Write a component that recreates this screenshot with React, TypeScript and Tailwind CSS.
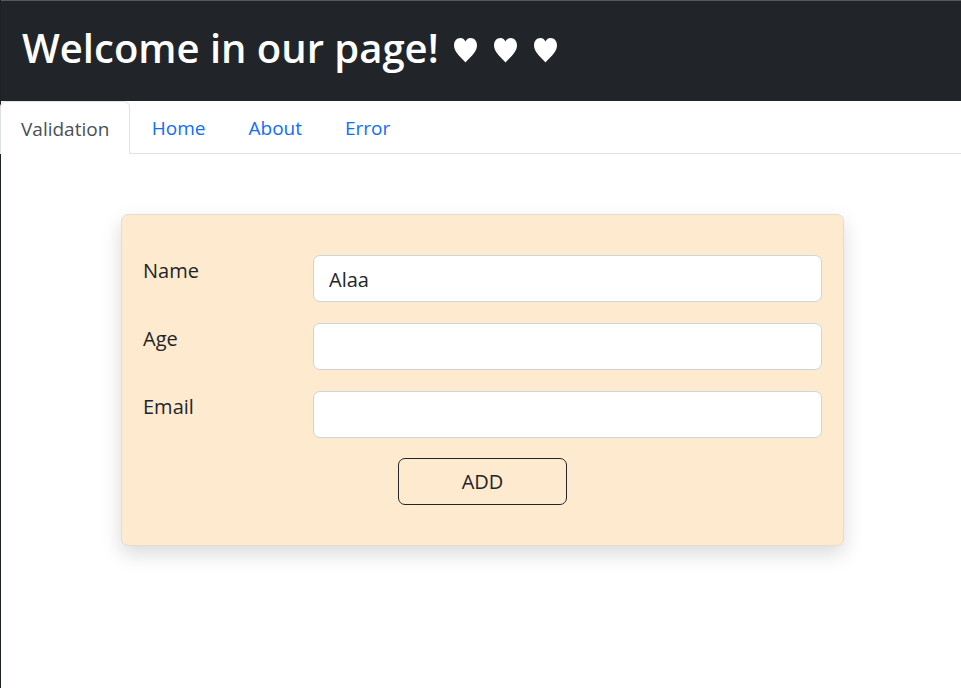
import { useState } from 'react';

const tabs = ['Validation', 'Home', 'About', 'Error'];

function Heart() {
  return (
    <svg width="25" height="26" viewBox="0 0 25 26" className="inline-block">
      <path
        d="M12.5 25.5 C9 21 1 15.5 1 8.2 C1 3.8 4 1 7.4 1 C10 1 11.6 2.6 12.5 4.6 C13.4 2.6 15 1 17.6 1 C21 1 24 3.8 24 8.2 C24 15.5 16 21 12.5 25.5 Z"
        fill="#ffffff"
      />
    </svg>
  );
}

function Field({ label, value }: { label: string; value: string }) {
  return (
    <div className="flex items-start">
      <label className="w-[170px] shrink-0 pt-[1px] text-[20px] leading-[30px] text-[#212529]">{label}</label>
      <input
        defaultValue={value}
        className="h-[47px] flex-1 rounded-[7px] border border-[#ced4da] bg-white px-[15px] pt-[2px] text-[20px] text-[#212529] outline-none"
      />
    </div>
  );
}

export default function App() {
  const [active, setActive] = useState('Validation');

  return (
    <div className="min-h-[688px] bg-white border-l border-[#1e2125] font-['Open_Sans',sans-serif]">
      {/* Header */}
      <header className="h-[101px] bg-[#212529] border-t border-[#555a60] flex items-center px-[21px]">
        <h1 className="flex items-center text-[40px] font-semibold text-white pb-[6px]">
          Welcome in our page!
          <span className="ml-[14px] flex items-center gap-[15px] pt-[4px]">
            <Heart />
            <Heart />
            <Heart />
          </span>
        </h1>
      </header>

      {/* Tabs */}
      <nav className="flex border-b border-[#dee2e6] h-[53px] -ml-px">
        {tabs.map((t) =>
          t === active ? (
            <button
              key={t}
              onClick={() => setActive(t)}
              className="-mb-px h-[53px] rounded-t-[6px] border border-[#dee2e6] border-b-white bg-white px-[20px] pt-[3px] text-[19px] text-[#495057]"
            >
              {t}
            </button>
          ) : (
            <button
              key={t}
              onClick={() => setActive(t)}
              className="h-[52px] px-[21.5px] pt-[3px] text-[19px] text-[#0d6efd]"
            >
              {t}
            </button>
          )
        )}
      </nav>

      {/* Form card */}
      <div className="pt-[60px] pl-[120px]">
        <div className="w-[723px] rounded-[7px] border border-[#e4dccf] bg-[#feebcf] px-[21px] py-[40px] shadow-[0_8px_20px_rgba(0,0,0,0.15)]">
          <div className="flex flex-col gap-[21px]">
            <Field label="Name" value="Alaa" />
            <Field label="Age" value="" />
            <Field label="Email" value="" />
          </div>
          <div className="flex justify-center pt-[20px]">
            <button className="h-[47px] w-[169px] rounded-[7px] border border-[#212529] text-[20px] text-[#212529]">
              ADD
            </button>
          </div>
        </div>
      </div>
    </div>
  );
}
